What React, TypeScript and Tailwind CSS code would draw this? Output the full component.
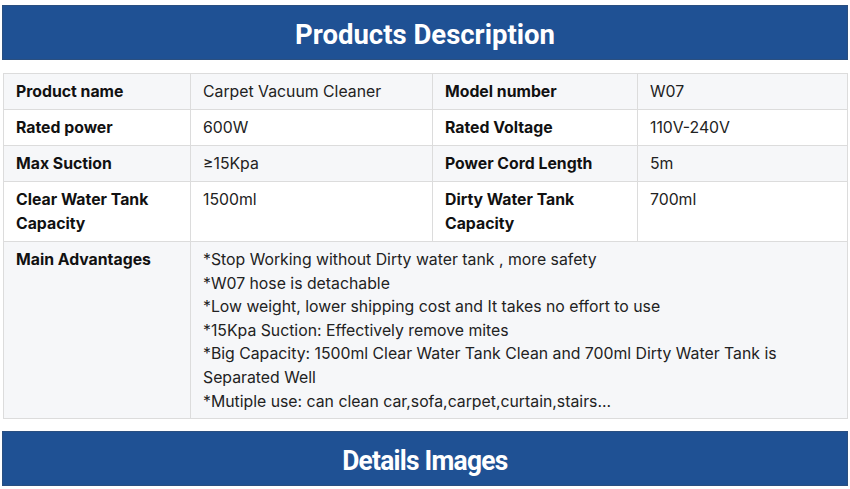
import React from 'react';

const rows: [string, string, string, string][] = [
  ['Product name', 'Carpet Vacuum Cleaner', 'Model number', 'W07'],
  ['Rated power', '600W', 'Rated Voltage', '110V-240V'],
  ['Max Suction', '≥15Kpa', 'Power Cord Length', '5m'],
  ['Clear Water Tank Capacity', '1500ml', 'Dirty Water Tank Capacity', '700ml'],
];

const advantages = [
  '*Stop Working without Dirty water tank , more safety',
  '*W07 hose is detachable',
  '*Low weight, lower shipping cost and It takes no effort to use',
  '*15Kpa Suction: Effectively remove mites',
  '*Big Capacity: 1500ml Clear Water Tank Clean and 700ml Dirty Water Tank is Separated Well',
  '*Mutiple use: can clean car,sofa,carpet,curtain,stairs...',
];

const Banner = ({ title, small }: { title: string; small?: boolean }) => (
  <div className="mx-[2px] h-[55px] bg-[#1f5194] border border-[#2a4f80] flex items-center justify-center pt-[4px]">
    <h2
      className={`text-white font-bold font-['Roboto',sans-serif] ${
        small ? 'text-[28px] tracking-[-0.8px] scale-x-[0.94]' : 'text-[27.5px]'
      }`}
    >
      {title}
    </h2>
  </div>
);

const cell = 'border border-[#dcdcdc] px-3 pt-[6px] pb-[5px] align-top leading-6';

export default function App() {
  return (
    <div className="w-[850px] h-[489px] bg-white pt-[5px] font-['Inter',sans-serif] text-[15.8px] text-[#222]">
      <Banner title="Products Description" />
      <div className="mt-[13px] mx-[3px] mb-[12px]">
        <table className="w-[844px] border-collapse table-fixed">
          <colgroup>
            <col className="w-[187px]" />
            <col className="w-[242px]" />
            <col className="w-[205px]" />
            <col className="w-[210px]" />
          </colgroup>
          <tbody>
            {rows.map((r, i) => (
              <tr key={i} className={i % 2 === 0 ? 'bg-[#f6f7f9]' : 'bg-white'}>
                <td className={`${cell} font-bold text-[#111]`}>{r[0]}</td>
                <td className={cell}>{r[1]}</td>
                <td className={`${cell} font-bold text-[#111]`}>{r[2]}</td>
                <td className={cell}>{r[3]}</td>
              </tr>
            ))}
            <tr className="bg-[#f6f7f9]">
              <td className={`${cell} font-bold text-[#111]`}>Main Advantages</td>
              <td colSpan={3} className={`${cell} leading-[23.6px] pr-[70px]`}>
                {advantages.map((a, i) => (
                  <div key={i}>{a}</div>
                ))}
              </td>
            </tr>
          </tbody>
        </table>
      </div>
      <Banner title="Details Images" small />
    </div>
  );
}
